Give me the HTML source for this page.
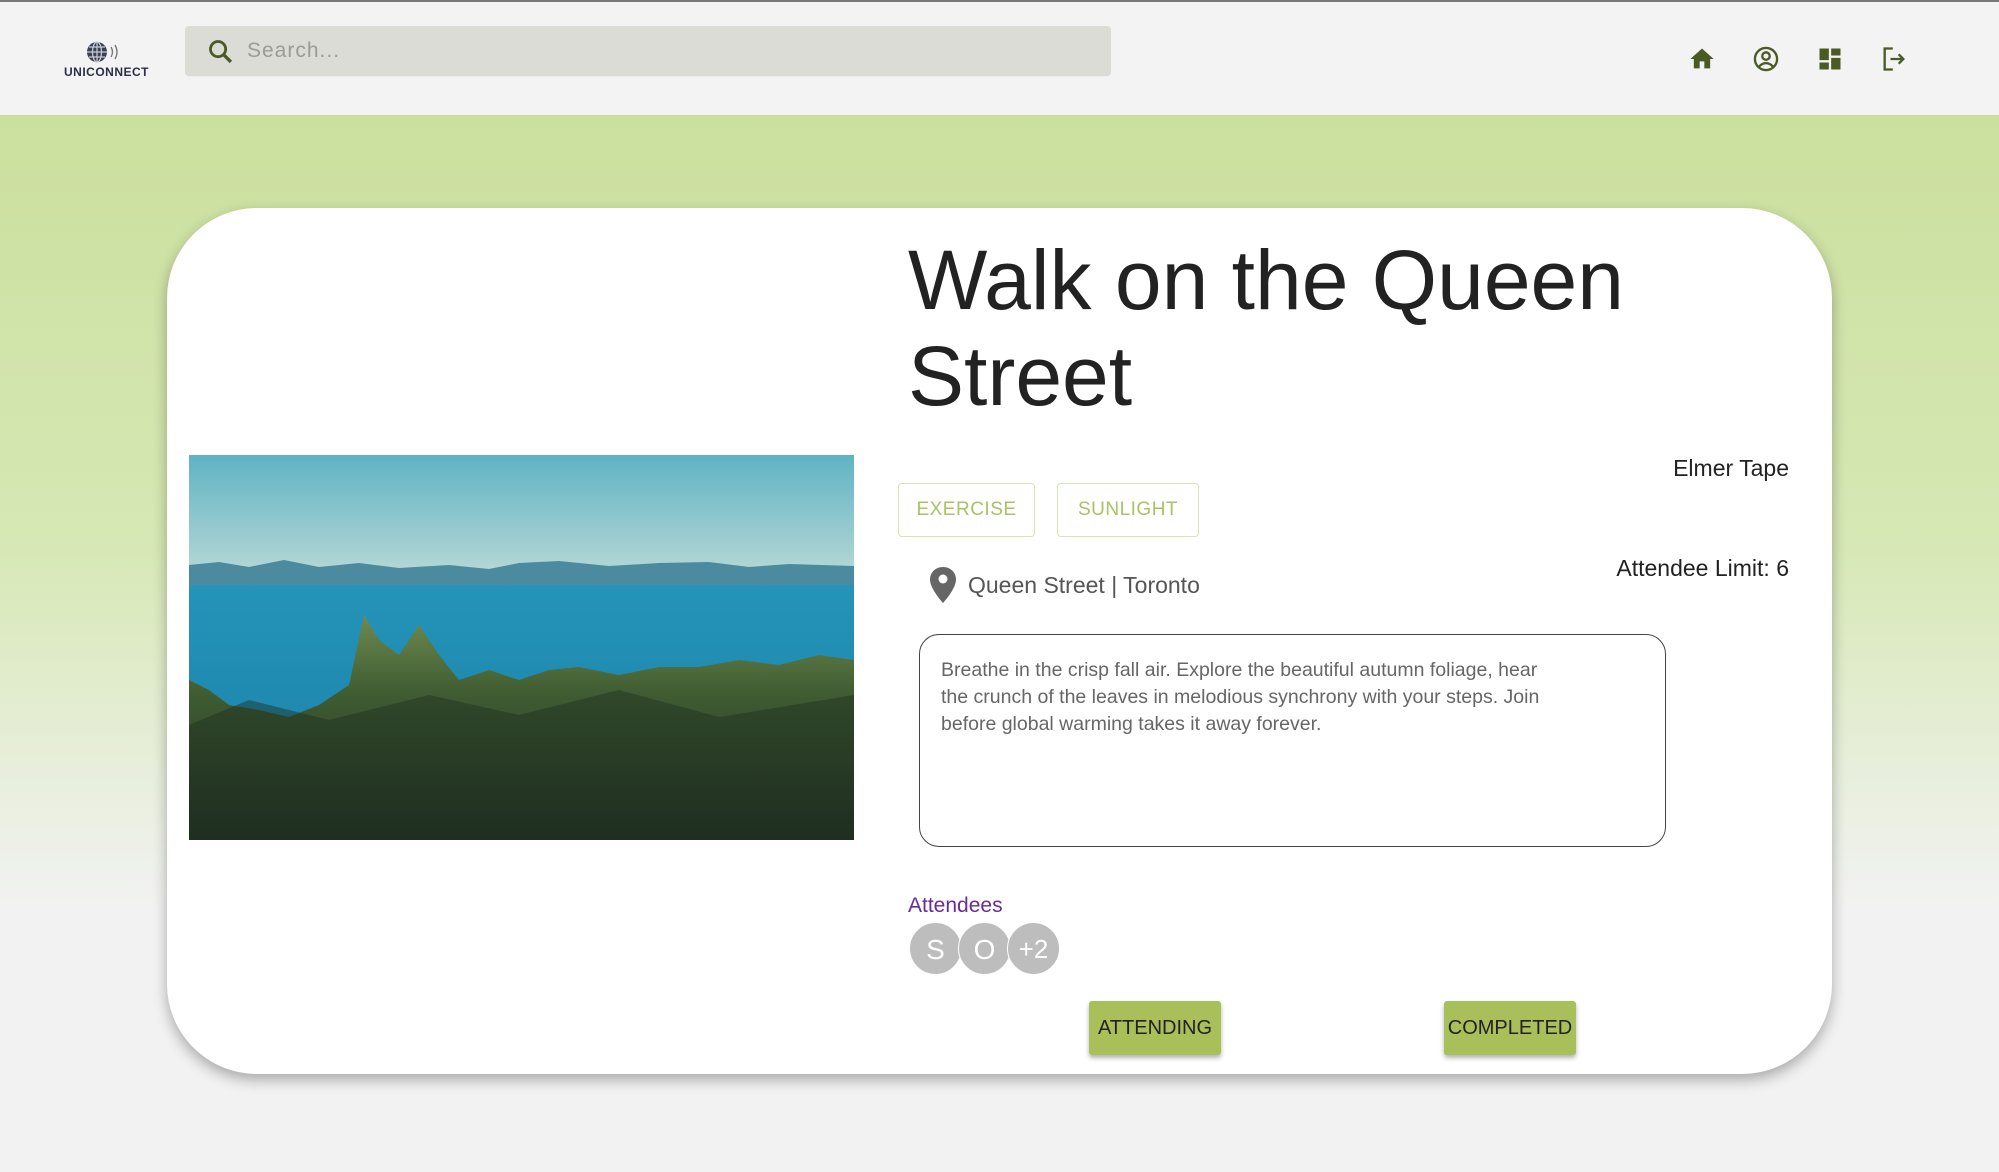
<!DOCTYPE html>
<html><head><meta charset="utf-8"><style>
*{margin:0;padding:0;box-sizing:border-box}
body{width:1999px;height:1172px;overflow:hidden;background:#f2f2f2;font-family:"Liberation Sans",sans-serif;position:relative}
.hdr{position:absolute;left:0;top:0;width:1999px;height:115px;background:#f3f3f3;border-top:2px solid #777}
.bg{position:absolute;left:0;top:115px;width:1999px;height:1055px;background:linear-gradient(#cbdf9e 0%,#d6e8b4 40%,#f2f2f2 75%)}
.search{position:absolute;left:185px;top:24px;width:926px;height:51px;background:#dadcd5;border-radius:4px;border-bottom:1px solid #eee}
.search span{position:absolute;left:62px;top:13px;font-size:21px;color:#9a9c96;letter-spacing:1px}
.card{position:absolute;left:167px;top:208px;width:1665px;height:866px;background:#fff;border-radius:90px;box-shadow:0 6px 14px rgba(0,0,0,.3)}
.abs{position:absolute}
.title{left:908px;top:232px;font-size:84px;line-height:96px;color:#222}
.tag{height:54px;top:483px;border:1.5px solid #d6e4b2;border-radius:4px;color:#a9c264;font-size:19px;line-height:52px;text-align:center;letter-spacing:.5px}
.desc{left:919px;top:634px;width:747px;height:213px;border:1.6px solid #444;border-radius:20px;padding:22px 21px;font-size:19.5px;line-height:27px;color:#666}
.circ{width:53px;height:53px;border-radius:50%;background:#bdbdbd;color:#fff;font-size:28px;line-height:53px;text-align:center;top:922px;border:1.5px solid #fff}
.btn{top:1001px;width:132px;height:54px;background:#a9c05a;border-radius:3px;box-shadow:0 3px 5px rgba(0,0,0,.3);font-size:20px;line-height:54px;text-align:center;color:#222}
</style></head><body>
<div class="hdr">
 <svg class="abs" style="left:84px;top:38px" width="38" height="24" viewBox="0 0 38 24"><circle cx="13" cy="12" r="10" fill="#3a3f5a"/><path d="M3 12h20M13 2v20M5 7h16M5 17h16" stroke="#ccc" stroke-width="1.2"/><ellipse cx="13" cy="12" rx="4.5" ry="10" fill="none" stroke="#ccc" stroke-width="1.2"/><path d="M27 7q3 5 0 10M31 5q4 7 0 14" stroke="#777" fill="none" stroke-width="1.3"/></svg>
 <div class="abs" style="left:64px;top:63px;font-size:12px;font-weight:bold;color:#2c2f44;letter-spacing:.5px">UNICONNECT</div>
 <div class="search"><svg class="abs" style="left:22px;top:12px" width="28" height="28" viewBox="0 0 24 24"><circle cx="9.5" cy="9.5" r="6.5" fill="none" stroke="#4a5a25" stroke-width="2.4"/><path d="M14.5 14.5l6 6" stroke="#4a5a25" stroke-width="2.8"/></svg><span>Search...</span></div>
 <svg class="abs" style="left:1688px;top:43px" width="28" height="28" viewBox="0 0 24 24"><path d="M10 20v-6h4v6h5v-8h3L12 3 2 12h3v8z" fill="#4a5a25"/></svg>
 <svg class="abs" style="left:1752px;top:43px" width="28" height="28" viewBox="0 0 24 24"><circle cx="12" cy="12" r="9.5" fill="none" stroke="#4a5a25" stroke-width="2"/><circle cx="12" cy="9.5" r="3.2" fill="none" stroke="#4a5a25" stroke-width="2"/><path d="M6 18.5q6-6 12 0" fill="none" stroke="#4a5a25" stroke-width="2"/></svg>
 <svg class="abs" style="left:1816px;top:43px" width="28" height="28" viewBox="0 0 24 24"><path d="M3 13h8V3H3zm0 8h8v-6H3zm10 0h8V11h-8zm0-18v6h8V3z" fill="#4a5a25"/></svg>
 <svg class="abs" style="left:1880px;top:43px" width="28" height="28" viewBox="0 0 24 24"><path d="M11 3H4v18h7" fill="none" stroke="#4a5a25" stroke-width="2"/><path d="M9 12h11M16 8l4 4-4 4" fill="none" stroke="#4a5a25" stroke-width="2"/></svg>
</div>
<div class="bg"></div>
<div class="card"></div>
<svg class="abs" style="left:189px;top:455px" width="665" height="385" viewBox="0 0 665 385" preserveAspectRatio="none">
 <defs><linearGradient id="sky" x1="0" y1="0" x2="0" y2="1"><stop offset="0" stop-color="#5fb3c4"/><stop offset="1" stop-color="#b7d8d6"/></linearGradient>
 <linearGradient id="sea" x1="0" y1="0" x2="0" y2="1"><stop offset="0" stop-color="#2a9fc2"/><stop offset="1" stop-color="#1a7ea6"/></linearGradient>
 <linearGradient id="fr" x1="0" y1="0" x2="0" y2="1"><stop offset="0" stop-color="#6e8a50"/><stop offset=".35" stop-color="#3f5c32"/><stop offset="1" stop-color="#1e2e20"/></linearGradient></defs>
 <rect width="665" height="385" fill="url(#sea)"/>
 <rect width="665" height="120" fill="url(#sky)"/>
 <path d="M0 110 L30 107 L60 112 L95 105 L130 112 L170 108 L210 113 L260 110 L300 114 L330 108 L370 106 L420 111 L470 108 L520 107 L560 112 L600 109 L665 111 L665 130 L0 130Z" fill="#4c8aa0"/>
 <path d="M0 225 L20 235 L40 250 L70 255 L100 262 L130 250 L160 230 L175 160 L190 185 L210 200 L230 170 L250 200 L270 225 L300 215 L330 225 L360 215 L390 212 L430 220 L470 212 L510 212 L550 205 L590 210 L630 200 L665 205 L665 385 L0 385Z" fill="url(#fr)"/>
 <path d="M0 270 L60 245 L140 265 L240 240 L330 260 L430 235 L530 262 L665 240 L665 385 L0 385Z" fill="#1f2f22" opacity=".45"/>
</svg>
<div class="abs title">Walk on the Queen<br>Street</div>
<div class="abs tag" style="left:898px;width:137px">EXERCISE</div>
<div class="abs tag" style="left:1057px;width:142px">SUNLIGHT</div>
<div class="abs" style="right:210px;top:455px;font-size:23px;color:#222">Elmer Tape</div>
<div class="abs" style="right:210px;top:555px;font-size:23px;color:#222">Attendee Limit: 6</div>
<svg class="abs" style="left:929px;top:566px" width="28" height="38" viewBox="0 0 28 38"><path d="M14 1C6.5 1 1 6.5 1 13.5 1 23 14 37 14 37S27 23 27 13.5C27 6.5 21.5 1 14 1z" fill="#666"/><circle cx="14" cy="13" r="4.5" fill="#fff"/></svg>
<div class="abs" style="left:968px;top:572px;font-size:23px;color:#555">Queen Street | Toronto</div>
<div class="abs desc">Breathe in the crisp fall air. Explore the beautiful autumn foliage, hear<br>the crunch of the leaves in melodious synchrony with your steps. Join<br>before global warming takes it away forever.</div>
<div class="abs" style="left:908px;top:894px;font-size:21px;color:#6a2a9a">Attendees</div>
<div class="abs circ" style="left:909px">S</div>
<div class="abs circ" style="left:958px">O</div>
<div class="abs circ" style="left:1007px;font-size:26px">+2</div>
<div class="abs btn" style="left:1089px">ATTENDING</div>
<div class="abs btn" style="left:1444px">COMPLETED</div>
</body></html>
